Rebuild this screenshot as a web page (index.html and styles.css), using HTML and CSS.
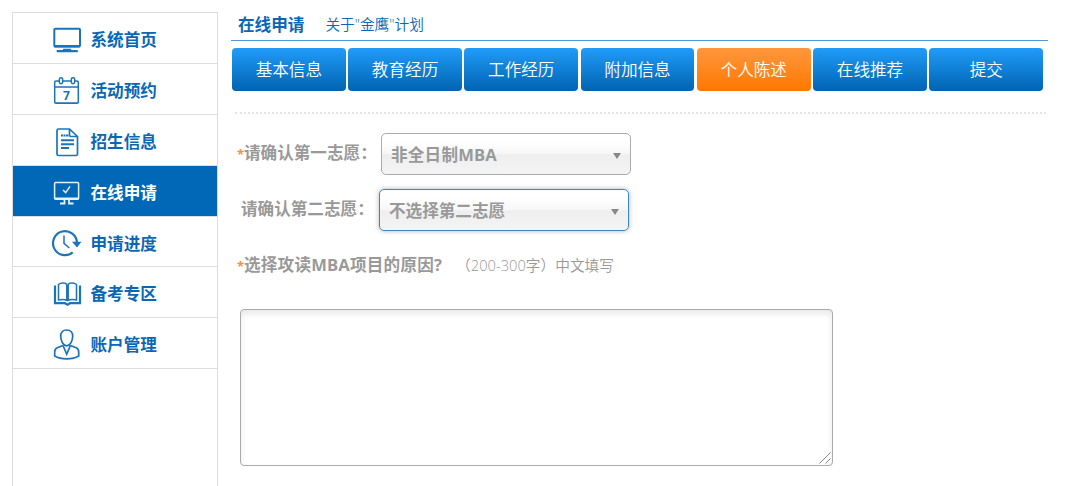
FILE: index.html
```
<!DOCTYPE html>
<html lang="zh-CN">
<head>
  <meta charset="utf-8">
  <title>在线申请</title>
  <link rel="stylesheet" href="styles.css">
</head>
<body>
  <div class="page">
    <nav class="sidebar">
      <a class="item">
        <svg class="icon" viewBox="0 0 32 34"><rect x="3.300" y="7.800" width="25.700" height="17.700" rx="1" stroke-width="2"/><path d="M3 25.200h26" stroke-width="2.400"/><path class="fill" d="M12.500 27.700h7l1 1.200h6.300v2.300H5.700v-2.300h5.800z"/></svg>
        <span>系统首页</span>
      </a>
      <a class="item">
        <svg class="icon" viewBox="0 0 32 34"><path d="M8 9H5q-1.300 0-1.300 1.300v20q0 1 1.300 1h21q1.300 0 1.300-1v-20Q27.300 9 26 9h-2M12 9h8M4 15h23M4 31h23"/><rect x="8.300" y="5.700" width="3.400" height="6" rx="1.700"/><rect x="20.300" y="5.700" width="3.400" height="6" rx="1.700"/><text x="12" y="27.500">7</text></svg>
        <span>活动预约</span>
      </a>
      <a class="item">
        <svg class="icon" viewBox="0 0 32 34"><path d="M18.500 6H7.500Q6 6 6 7.500v23.500q0 1.500 1.500 1.500H25q1.500 0 1.500-1.500V13.500zv6q0 1.500 1.500 1.500h6.500" stroke-width="1.700"/><path d="M10 12.500h8" stroke-width="1.800" stroke-dasharray="2 .5"/><path d="M10 17.300h13M10 21.200h13M10 25h8" stroke-width="2"/></svg>
        <span>招生信息</span>
      </a>
      <a class="item active">
        <svg class="icon" viewBox="0 0 32 34"><rect x="3.600" y="8.600" width="24" height="16.600" rx="1"/><path d="M4 24.300h23.500M13.500 25v4.500H9M18 25v4.500h4.500" stroke-width="1.800"/><path d="M12 16l2.700 2.600 4.300-6.200" stroke-width="1.500"/></svg>
        <span>在线申请</span>
      </a>
      <a class="item">
        <svg class="icon" viewBox="0 0 32 34"><path d="M26 18a12 12 0 1 0-4.300 9.400" stroke-width="2.200"/><path d="M13 10.500v7.800l5.300 4.700"/><path class="fill" d="M21 16.800h9.500L26 22.500z"/></svg>
        <span>申请进度</span>
      </a>
      <a class="item">
        <svg class="icon" viewBox="0 0 32 34"><path d="M7.500 25V9.500q2-1.700 5-1.400 3 0 3.300 2v15.200q-3-1.300-8.300-.3zM25.500 25V9.500q-2-1.700-5-1.400-3 0-3.300 2v15.200q3-1.300 8.300-.3z"/><path d="M4 10.500v17.700h10l2.500 1.500 2.500-1.500h10V10.500" stroke-width="2.200"/></svg>
        <span>备考专区</span>
      </a>
      <a class="item">
        <svg class="icon" viewBox="0 0 32 34"><path d="M15.700 4c-4 0-6.200 2.500-6 6.500.2 4 2.300 9.300 6 9.300s5.800-5.300 6-9.300c.2-4-2-6.500-6-6.500zM12 19.500l-5.800 2.300Q3.700 23 3.700 26v4q4.500 2.800 12 2.800t12-2.800v-4q0-3-2.500-4.200l-5.800-2.300M12 19.500l3.700 8.700 3.700-8.700" stroke-width="1.700"/></svg>
        <span>账户管理</span>
      </a>
    </nav>

    <main>
      <header>
        <h1>在线申请</h1>
        <a class="sub">关于"金鹰"计划</a>
      </header>
      <div class="tabs">
        <a>基本信息</a>
        <a>教育经历</a>
        <a>工作经历</a>
        <a>附加信息</a>
        <a class="current">个人陈述</a>
        <a>在线推荐</a>
        <a>提交</a>
      </div>

      <form>
        <div class="row">
          <label><i>*</i>请确认第一志愿：</label>
          <div class="select">非全日制MBA</div>
        </div>
        <div class="row second">
          <label>请确认第二志愿：</label>
          <div class="select focus">不选择第二志愿</div>
        </div>
        <div class="row reason">
          <label for="reason"><i>*</i>选择攻读MBA项目的原因?</label>
          <span class="hint">（200-300字）中文填写</span>
        </div>
        <div class="field">
          <textarea id="reason"></textarea>
          <svg class="grip" viewBox="0 0 12 12"><path d="M.5 11.500l11-11M6.500 11.500l5-5"/></svg>
        </div>
      </form>
    </main>
  </div>
</body>
</html>
```
FILE: styles.css
```
* {
  box-sizing: border-box;
}

body {
  margin: 0;
  background: #fff;
  color: #0a67b5;
  font-family: "Open Sans", "Noto Sans CJK SC", sans-serif;
  font-size: 16.6px;
  line-height: 24px;
}

.page {
  display: flex;
  height: 486px;
  padding: 12px 0 0 12px;
  overflow: hidden;
}

/* left menu */
.sidebar {
  width: 206px;
  flex: none;
  border: 1px solid #ddd;
  border-bottom: none;
}

.item {
  display: flex;
  align-items: center;
  height: 50.9px;
  padding-left: 38px;
  border-bottom: 1px solid #ddd;
  font-weight: bold;
}

.item span {
  margin: 4px 0 0 7.500px;
}

.icon {
  width: 32px;
  height: 34px;
  fill: none;
  stroke: #1974bc;
  stroke-width: 1.5;
}

.icon .fill,
.icon text {
  fill: #1974bc;
  stroke: none;
}

.icon text {
  font: bold 12px "Open Sans", sans-serif;
}

.active {
  background: #0068b7;
  color: #fff;
}

.active .icon {
  stroke: #e6f1fa;
}

/* content */
main {
  width: 817px;
  margin-left: 13px;
}

header {
  display: flex;
  align-items: center;
  height: 29px;
  padding: 0 0 3px 7px;
  border-bottom: 1.5px solid #4b9bd6;
}

h1 {
  margin: 0;
  font-size: 16.6px;
}

.sub {
  margin: -2px 0 0 21px;
  font-size: 14.7px;
  font-weight: 350;
}

.tabs {
  display: flex;
  gap: 2.6px;
  width: 811px;
  margin: 7px 0 0 1px;
}

.tabs a {
  flex: 1;
  height: 43px;
  border-radius: 4px;
  background: linear-gradient(#219cf9, #0063b1);
  color: #fff;
  font-weight: 350;
  line-height: 44px;
  text-align: center;
}

.tabs .current {
  background: linear-gradient(#ff973d, #ff7800);
}

form {
  width: 811px;
  margin: 21px 0 0 4px;
  padding: 19px 0 0 2px;
  border-top: 2px dotted #e4e4e4;
  color: #999;
}

.row {
  display: flex;
  align-items: center;
  height: 42px;
}

label {
  width: 144px;
  padding-bottom: 2px;
  font-weight: bold;
}

label i {
  display: inline-block;
  width: 7px;
  color: #ff8c3c;
  font-size: 13px;
  font-style: normal;
}

.second {
  margin: 14px 0 0 4px;
}

.second label {
  width: 138px;
}

.select {
  display: flex;
  align-items: center;
  justify-content: space-between;
  width: 250px;
  height: 42px;
  padding: 1px 9px 0;
  border: 1px solid #aaa;
  border-radius: 5px;
  background: linear-gradient(#fff 20%, #f6f6f6 50%, #eee 52%, #f4f4f4);
  font-weight: bold;
  letter-spacing: 0.2px;
}

.select::after {
  content: "";
  margin-top: 3px;
  border: 4px solid transparent;
  border-top: 6px solid #888;
  border-bottom: none;
}

.focus {
  border-color: #3a87c8;
  box-shadow: 0 0 5px rgba(0, 0, 0, 0.3);
  letter-spacing: 0;
}

.reason {
  margin-top: 13px;
}

.reason label {
  width: auto;
  padding: 0;
  letter-spacing: 0.2px;
}

.hint {
  margin-left: 14px;
  color: #999;
  font-size: 14.7px;
  font-weight: 350;
}

.field {
  position: relative;
  width: 593px;
  margin: 23px 0 0 3px;
}

textarea {
  display: block;
  width: 593px;
  height: 157px;
  border: 1px solid #aaa;
  border-radius: 4px;
  box-shadow: inset 0 4px 6px rgba(0, 0, 0, 0.09);
  resize: none;
}

.grip {
  position: absolute;
  right: 2px;
  bottom: 2px;
  width: 12px;
  height: 12px;
  fill: none;
  stroke: #888;
}
```
